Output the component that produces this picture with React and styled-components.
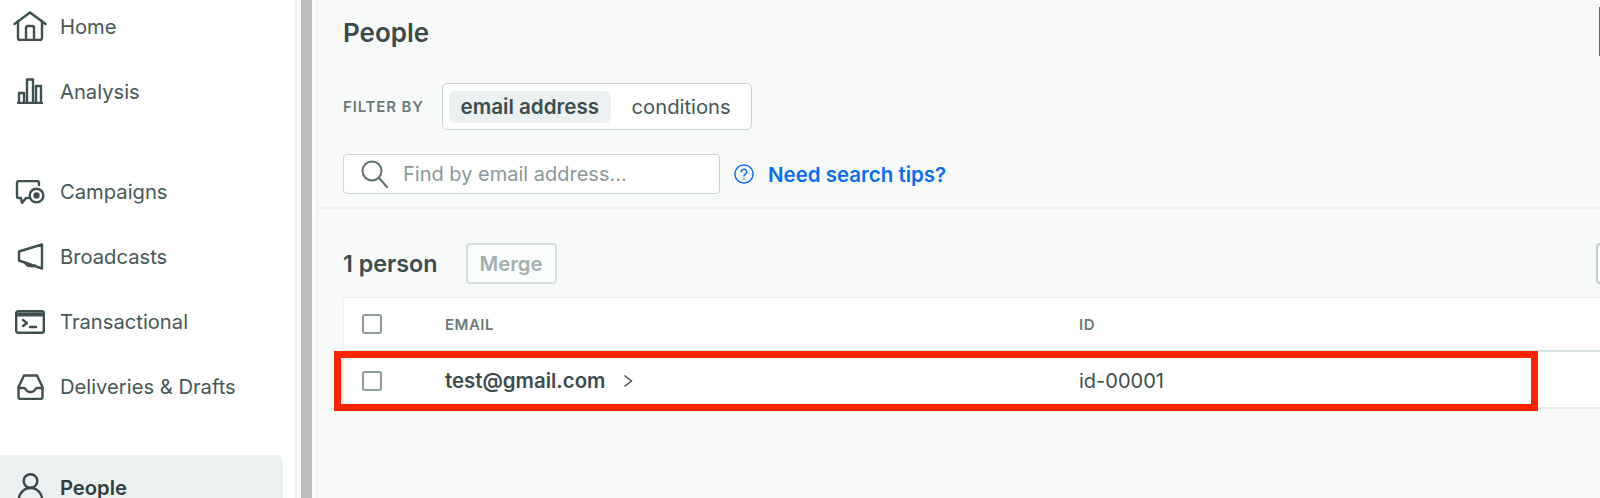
import styled, { createGlobalStyle } from "styled-components";

const GlobalStyle = createGlobalStyle`
  html, body {
    margin: 0;
    height: 498px;
    overflow: hidden;
    background: #fff;
    font-family: "Inter", "Liberation Sans", sans-serif;
    color: #3c4d4d;
  }
  * { box-sizing: border-box; }
`;

const Page = styled.div`
  display: flex;
  width: 1600px;
  height: 498px;
  overflow: hidden;
`;

const Sidebar = styled.aside`
  width: 295px;
  flex: none;
  background: #fff;
`;

const Nav = styled.nav`
  display: flex;
  flex-direction: column;
  gap: 35.5px;
  margin-top: -6.5px;
  padding-right: 12px;
`;

const NavGroup = styled.div`
  display: flex;
  flex-direction: column;
`;

const NavItem = styled.a`
  display: flex;
  align-items: center;
  height: 65px;
  flex: none;
  border-radius: 0 8px 8px 0;
  font-size: 20.2px;
  color: ${(p) => (p.$active ? "#2f3f3f" : "#465757")};
  font-weight: ${(p) => (p.$active ? 600 : 400)};
  background: ${(p) => (p.$active ? "#ebf0f0" : "transparent")};
`;

const NavIcon = styled.span`
  width: 60px;
  flex: none;
  display: flex;
  justify-content: center;
  svg { display: block; }
`;

const Splitter = styled.div`
  width: 21px;
  flex: none;
  padding-left: 4px;
  background: #fdfdfd;
  border-left: 2px solid #f0f1f1;
`;

const SplitterBar = styled.div`
  width: 11px;
  height: 100%;
  background: #bdbdbd;
`;

const Main = styled.main`
  flex: 1;
  min-width: 0;
  background: #f8fafa;
  border-left: 1px solid #eef1f1;
  overflow: hidden;
`;

const Top = styled.section`
  padding: 0 0 13px 26px;
  border-bottom: 2px solid #eef1f1;
`;

const TitleRow = styled.div`
  display: flex;
  justify-content: space-between;
  height: 83px;
  padding-top: 7px;
`;

const Title = styled.h1`
  margin: 1px 0 0;
  height: 50px;
  line-height: 50px;
  font-size: 26px;
  font-weight: 600;
  color: #3a4a4a;
`;

const EdgeMark = styled.div`
  width: 1px;
  height: 49px;
  background: #5a6666;
`;

const FilterRow = styled.div`
  display: flex;
  align-items: center;
  gap: 19px;
`;

const FilterLabel = styled.span`
  width: 80px;
  white-space: nowrap;
  font-size: 15px;
  font-weight: 600;
  letter-spacing: 0.85px;
  color: #6a7a7a;
`;

const Segments = styled.div`
  display: flex;
  align-items: center;
  width: 310px;
  height: 47px;
  padding-left: 6px;
  background: #fff;
  border: 1px solid #c9d5d5;
  border-radius: 5px;
`;

const Segment = styled.span`
  display: flex;
  align-items: center;
  height: 32px;
  padding: 0 ${(p) => (p.$active ? "11.5px" : "21px")};
  font-size: ${(p) => (p.$active ? "20.6px" : "20.2px")};
  white-space: nowrap;
  border-radius: 6px;
  font-weight: ${(p) => (p.$active ? 600 : 400)};
  color: ${(p) => (p.$active ? "#3c4d4d" : "#465757")};
  background: ${(p) => (p.$active ? "#ebf0f0" : "transparent")};
`;

const SearchRow = styled.div`
  display: flex;
  align-items: center;
  margin-top: 24px;
`;

const SearchBox = styled.div`
  display: flex;
  align-items: center;
  width: 377px;
  height: 40px;
  padding-left: 17px;
  gap: 15px;
  background: #fff;
  border: 1px solid #c9d5d5;
  border-radius: 4px;
  font-size: 20px;
  color: #8a9898;
`;

const HelpLink = styled.a`
  display: flex;
  align-items: center;
  gap: 14px;
  margin-left: 14px;
  font-size: 20.5px;
  font-weight: 600;
  color: #0b6cf2;
`;

const ListSection = styled.section`
  padding: 34px 0 0 26px;
`;

const Toolbar = styled.div`
  display: flex;
  align-items: center;
  height: 41px;
  margin-bottom: 13px;
`;

const Count = styled.span`
  font-size: 23.3px;
  font-weight: 600;
  color: #3c4d4d;
  margin-right: 28px;
`;

const Button = styled.button`
  width: ${(p) => p.$width}px;
  height: 41px;
  padding: 0;
  flex: none;
  background: #fcfdfd;
  border: 2px solid #d5dfdf;
  border-radius: 4px;
  font-family: inherit;
  font-size: 20.3px;
  font-weight: 600;
  color: #9fb0b0;
`;

const EdgeButton = styled(Button)`
  margin-left: auto;
  margin-right: -36px;
  border-color: #c4d0d0;
`;

const Table = styled.div`
  background: #fff;
  border-top: 1px solid #eef1f1;
  border-left: 1px solid #eef1f1;
`;

const TableRow = styled.div`
  position: relative;
  display: grid;
  grid-template-columns: 101px 634px 1fr;
  align-items: center;
  height: ${(p) => p.$height}px;
  padding-top: ${(p) => (p.$head ? 0 : 2)}px;
  border-bottom: 2px solid ${(p) => (p.$head ? "#dbe4e4" : "#e8eded")};
`;

const CheckCell = styled.div`
  padding-left: 18px;
`;

const Checkbox = styled.span`
  display: block;
  width: 20px;
  height: 20px;
  background: #fff;
  border: 2px solid #8d9e9e;
  border-radius: 3px;
`;

const HeadCell = styled.span`
  font-size: 15px;
  font-weight: 600;
  letter-spacing: 0.5px;
  color: #6a7a7a;
`;

const EmailCell = styled.span`
  display: flex;
  align-items: center;
  gap: 18px;
  font-size: 20.4px;
  font-weight: 600;
  color: #3c4d4d;
`;

const IdCell = styled.span`
  font-size: 20px;
  color: #3c4d4d;
`;

const Highlight = styled.div`
  position: absolute;
  left: -10px;
  top: -1px;
  width: 1204px;
  height: 60px;
  border: 7px solid #ff2400;
  pointer-events: none;
`;

const stroke = {
  fill: "none",
  stroke: "#3f5050",
  strokeWidth: 2.4,
  strokeLinecap: "round",
  strokeLinejoin: "round",
};

const HomeIcon = () => (
  <svg width="34" height="30" viewBox="0 0 34 30" {...stroke}>
    <path d="M1.5 13 17 1.500 32.500 13" />
    <path d="M5 10v17a2 2 0 0 0 2 2h20a2 2 0 0 0 2-2V10" />
    <path d="M13 29V17a2 2 0 0 1 2-2h4a2 2 0 0 1 2 2v12" />
  </svg>
);

const AnalysisIcon = () => (
  <svg width="26" height="26" viewBox="0 0 26 26" {...stroke}>
    <path d="M1 25h24" />
    <path d="M2 25V15h5v10M10 25V1.500h6V25M19 25V8h5v17" />
  </svg>
);

const CampaignsIcon = () => (
  <svg width="30" height="24" viewBox="0 0 30 24" {...stroke}>
    <path d="M24 5V3a2 2 0 0 0-2-2H4a2 2 0 0 0-2 2v13a2 2 0 0 0 2 2h2l1 5 4-5h2" />
    <circle cx="21.500" cy="15.500" r="6.800" />
    <circle cx="21.500" cy="15.500" r="2" fill="#3f5050" />
  </svg>
);

const BroadcastsIcon = () => (
  <svg width="27" height="27" viewBox="0 0 27 27" {...stroke}>
    <path d="M25 1.500v24L2 17.500v-9z" />
    <path d="M8.500 20c1 3 6.500 4 9.500 2.500" />
  </svg>
);

const TransactionalIcon = () => (
  <svg width="30" height="24" viewBox="0 0 30 24" {...stroke}>
    <rect x="1.200" y="1.200" width="27.600" height="21.600" rx="2" />
    <path d="M1.500 4.500h27" strokeWidth="4" strokeLinecap="butt" />
    <path d="m8 10 4 3-4 3M15 17h6" />
  </svg>
);

const DeliveriesIcon = () => (
  <svg width="27" height="26" viewBox="0 0 27 26" {...stroke}>
    <path d="M1.500 13 7 1.500h13L25.500 13v10a2 2 0 0 1-2 2h-20a2 2 0 0 1-2-2z" />
    <path d="M1.500 14H7c2 0 2 4 5 4h3c3 0 3-4 5-4h5.500" />
  </svg>
);

const PeopleIcon = () => (
  <svg width="27" height="28" viewBox="0 0 27 28" {...stroke} stroke="#3a4a4a">
    <circle cx="13.500" cy="8" r="6.800" />
    <path d="M1.500 28c0-7 5-13 12-13s12 6 12 13" />
  </svg>
);

const SearchIcon = () => (
  <svg width="27" height="28" viewBox="0 0 27 28" fill="none" stroke="#5f7070" strokeWidth="2" strokeLinecap="round">
    <circle cx="11" cy="11" r="9.500" />
    <path d="m18 18 8 9" />
  </svg>
);

const HelpIcon = () => (
  <svg width="20" height="20" viewBox="0 0 19 19" fill="none" stroke="#0b6cf2" strokeWidth="1.400" strokeLinecap="round">
    <circle cx="9.500" cy="9.500" r="8.600" />
    <path d="M7 7.400a2.500 2.500 0 1 1 3.700 2.200c-.8.500-1.200 1-1.200 1.900" />
    <path d="M9.500 14.200v.1" />
  </svg>
);

const ChevronIcon = () => (
  <svg width="10" height="14" viewBox="0 0 10 14" fill="none" stroke="#3c4d4d" strokeWidth="1.400">
    <path d="m1.500 1.500 7 5.500-7 5.500" />
  </svg>
);

const navGroups = [
  [
    { label: "Home", icon: <HomeIcon /> },
    { label: "Analysis", icon: <AnalysisIcon /> },
  ],
  [
    { label: "Campaigns", icon: <CampaignsIcon /> },
    { label: "Broadcasts", icon: <BroadcastsIcon /> },
    { label: "Transactional", icon: <TransactionalIcon /> },
    { label: "Deliveries & Drafts", icon: <DeliveriesIcon /> },
  ],
  [{ label: "People", icon: <PeopleIcon />, active: true }],
];

const App = () => {
  return (
    <Page>
      <GlobalStyle />
      <Sidebar>
        <Nav>
          {navGroups.map((group) => (
            <NavGroup key={group[0].label}>
              {group.map((item) => (
                <NavItem key={item.label} $active={item.active}>
                  <NavIcon>{item.icon}</NavIcon>
                  {item.label}
                </NavItem>
              ))}
            </NavGroup>
          ))}
        </Nav>
      </Sidebar>
      <Splitter>
        <SplitterBar />
      </Splitter>
      <Main>
        <Top>
          <TitleRow>
            <Title>People</Title>
            <EdgeMark />
          </TitleRow>
          <FilterRow>
            <FilterLabel>FILTER BY</FilterLabel>
            <Segments>
              <Segment $active>email address</Segment>
              <Segment>conditions</Segment>
            </Segments>
          </FilterRow>
          <SearchRow>
            <SearchBox>
              <SearchIcon />
              Find by email address...
            </SearchBox>
            <HelpLink>
              <HelpIcon />
              Need search tips?
            </HelpLink>
          </SearchRow>
        </Top>
        <ListSection>
          <Toolbar>
            <Count>1 person</Count>
            <Button $width={91}>Merge</Button>
            <EdgeButton $width={40} />
          </Toolbar>
          <Table>
            <TableRow $head $height={54}>
              <CheckCell>
                <Checkbox />
              </CheckCell>
              <HeadCell>EMAIL</HeadCell>
              <HeadCell>ID</HeadCell>
            </TableRow>
            <TableRow $height={57}>
              <CheckCell>
                <Checkbox />
              </CheckCell>
              <EmailCell>
                test@gmail.com
                <ChevronIcon />
              </EmailCell>
              <IdCell>id-00001</IdCell>
              <Highlight />
            </TableRow>
          </Table>
        </ListSection>
      </Main>
    </Page>
  );
};

export default App;
